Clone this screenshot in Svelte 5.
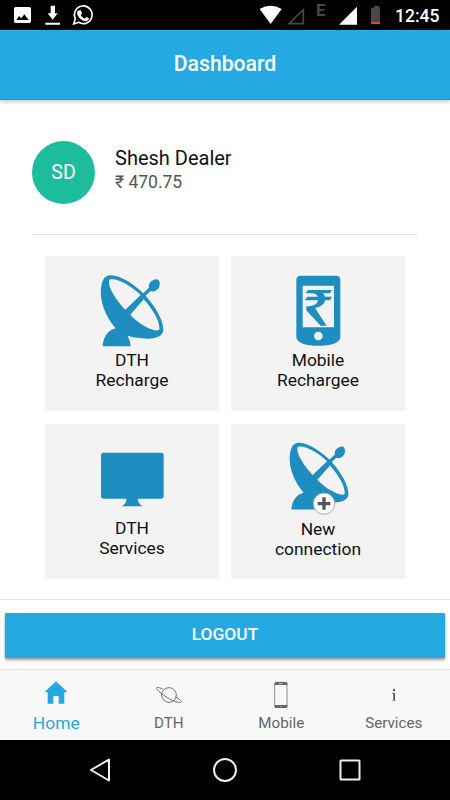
<script>
  const services = [
    { icon: 'dish', lines: ['DTH', 'Recharge'] },
    { icon: 'phone', lines: ['Mobile', 'Rechargee'] },
    { icon: 'monitor', lines: ['DTH', 'Services'] },
    { icon: 'newdish', lines: ['New', 'connection'] }
  ];
  const tabs = ['Home', 'DTH', 'Mobile', 'Services'];
</script>

{#snippet dish()}
  <path fill-rule="evenodd" d="M205 76C235 68 287 103 319 138C350 173 372 213 371 240C369 263 335 268 310 264C293 263 279 260 264 256Q271 269 273 288H189C191 258 205 240 228 234C195 195 180 150 184 115C187 90 193 79 205 76ZM209 88C202 108 230 150 257 178L303 134C275 106 229 80 209 88ZM312 147L272 193C300 225 350 248 359 238C362 212 335 172 312 147Z" />
  <path d="M309 130L328 112L335 120L316 138Z" />
  <path d="M328 113C324 98 339 86 353 87C362 92 363 106 355 116C347 124 333 126 328 119Z" />
{/snippet}

<div class="screen">
  <div class="status">
    <svg width="110" height="30" viewBox="0 0 330 90">
      <path fill="#fff" fill-rule="evenodd" d="M47 21H88Q93 21 93 26V64Q93 69 88 69H47Q42 69 42 64V26Q42 21 47 21ZM49 60H86L73 43L64 55L57 48Z" />
      <path fill="#fff" d="M152 17H165V40H173L158 59L143 40H152ZM136 68H180V74H136Z" />
      <path fill="none" stroke="#fff" stroke-width="5" d="M221 72L226 56A26.500 26.500 0 1 1 236 67Z" />
      <path fill="#fff" d="M237 31Q242 29 244 34L246 40Q246 42 242 45Q246 53 254 56L259 51L267 55Q266 63 257 64C246 64 231 49 231 39Q231 33 237 31Z" />
    </svg>
    <svg width="125" height="30" viewBox="90 0 375 90">
      <path fill="#fff" d="M104 27Q136 8 170 27L137 72Z" />
      <path fill="none" stroke="#484848" stroke-width="5" d="M192 71L235 29V71Z" />
      <path fill="#fff" d="M342 74L396 20V74Z" />
      <path fill="#484848" d="M438 23H447V18H463V23H473V67H438Z" />
      <path fill="#e64a19" d="M438 66H473V72H438Z" />
      <text x="273" y="49" class="edge">E</text>
    </svg>
    <span class="time">12:45</span>
  </div>

  <header><h1>Dashboard</h1></header>

  <main>
    <section class="profile">
      <div class="avatar">SD</div>
      <div class="who">
        <div class="name">Shesh Dealer</div>
        <div class="balance">₹ 470.75</div>
      </div>
    </section>

    <section class="grid">
      {#each services as s}
        <button class="card {s.icon}">
          {#if s.icon === 'dish'}
            <svg width="66" height="74" viewBox="178 68 198 222">{@render dish()}</svg>
          {:else if s.icon === 'phone'}
            <svg width="66" height="74" viewBox="181 68 198 222">
              <path fill-rule="evenodd" d="M227 76H335Q347 77 347 90V262C342 279 317 286 281 286C245 286 220 279 215 262V90Q215 77 227 76ZM234 106V231H328V106ZM281 244A13 13 0 1 0 281 270A13 13 0 1 0 281 244Z" />
              <path d="M250 119H322L316 129H295Q300 134 301 139H322L316 150H301C299 163 287 170 271 173L306 226H288L245 180V168C264 169 278 162 280 150H241L248 139H279Q275 129 261 129H242Z" />
            </svg>
          {:else if s.icon === 'monitor'}
            <svg width="66" height="74" viewBox="178 62 198 222">
              <path d="M191 97H364Q372 97 372 105V228Q372 235 364 235H294C295 246 300 253 309 258H245C255 252 261 246 260 235H191Q184 235 184 228V105Q184 97 191 97Z" />
            </svg>
          {:else}
            <svg width="66" height="74" viewBox="181 62 198 222">
              <g transform="translate(22.500 -3) scale(.94)">{@render dish()}</g>
              <circle cx="298" cy="250" r="32" fill="#fff" stroke="#aaa" stroke-width="3" />
              <path fill="#555" d="M293 231H303V245H317V255H303V268H293V255H279V245H293Z" />
            </svg>
          {/if}
          {#each s.lines as line}<span>{line}</span>{/each}
        </button>
      {/each}
    </section>
  </main>

  <div class="action"><button class="logout">LOGOUT</button></div>

  <nav class="tabs">
    {#each tabs as tab, i}
      <a href="#{tab}" class:active={i === 0}>
        <svg width="30" height="30" viewBox="0 0 90 90">
          {#if i === 0}
            <path fill="#25a9e2" d="M45 10L80 43H70V77H53V54H37V77H20V43H10Z" />
          {:else if i === 1}
            <g fill="none" stroke="#555" stroke-width="2.500">
              <circle cx="45" cy="51" r="22" />
              <path d="M27 34C8 24 4 29 10 35C20 47 51 69 73 73C87 76 85 68 65 57" />
            </g>
          {:else if i === 2}
            <rect x="26" y="13" width="37" height="76" rx="5" fill="none" stroke="#777" stroke-width="2.500" />
            <path fill="#666" d="M26 21V16Q26 12 31 12H59Q64 12 64 16V21ZM26 81H64V86Q64 90 59 90H31Q26 90 26 86Z" />
            <path stroke="#f8f8f8" stroke-width="2" d="M39 17H50M43 86H47" />
          {:else}
            <circle cx="45" cy="36" r="3.500" fill="#555" />
            <path fill="#555" d="M40 45H48V66L51 68H39L43 66V48L40 47Z" />
          {/if}
        </svg>
        <span>{tab}</span>
      </a>
    {/each}
  </nav>

  <div class="system">
    <svg width="450" height="60" viewBox="0 0 450 60" fill="none" stroke="#eee" stroke-width="2" stroke-linejoin="round">
      <path d="M91 30L109 19.500V40.500Z" />
      <circle cx="225" cy="30" r="11" />
      <rect x="340.500" y="20.500" width="19" height="19" rx=".5" />
    </svg>
  </div>
</div>

<style>
  :global(body) { margin: 0; background: #fff; }
  .screen {
    width: 450px;
    height: 800px;
    display: flex;
    flex-direction: column;
    overflow: hidden;
    background: #fff;
    font-family: Roboto, "Noto Sans", sans-serif;
    color: #111;
  }
  svg { display: block; flex: none; }
  button { border: 0; margin: 0; padding: 0; font: inherit; color: inherit; }
  .status {
    height: 30px;
    flex: none;
    display: flex;
    align-items: center;
    background: #000;
  }
  .status svg + svg { margin-left: 145px; }
  .edge { font: 700 50px Roboto, sans-serif; fill: #484848; }
  .time {
    margin-left: 15px;
    color: #fff;
    font-size: 17.500px;
    font-weight: 500;
    line-height: 30px;
    padding-top: 2px;
  }
  header {
    height: 70px;
    flex: none;
    box-sizing: border-box;
    display: flex;
    justify-content: center;
    background: #25a9e2;
    border-bottom: 1px solid #159bd5;
    box-shadow: 0 2px 4px rgba(0, 0, 0, .22);
  }
  h1 {
    margin: 0;
    color: #fff;
    font-size: 21.200px;
    line-height: 68px;
    font-weight: 500;
  }
  main { flex: none; height: 499px; }
  .profile {
    height: 134px;
    margin: 0 32px;
    border-bottom: 1px solid #e2e2e2;
    display: flex;
  }
  .avatar {
    width: 63px;
    height: 63px;
    margin-top: 41px;
    border-radius: 50%;
    background: #1dbc9c;
    color: #fff;
    font-size: 19.500px;
    line-height: 63px;
    text-align: center;
  }
  .who { margin: 46px 0 0 20px; }
  .name { font-size: 20px; line-height: 25px; }
  .balance { font-size: 17.500px; line-height: 22px; color: #555; }
  .grid {
    margin: 21px 45px 0;
    display: grid;
    grid-template-columns: 174px 174px;
    grid-auto-rows: 155px;
    gap: 13px 12px;
  }
  .card {
    display: flex;
    flex-direction: column;
    align-items: center;
    background: #f3f3f3;
    padding-top: 17px;
    font-size: 17.400px;
    line-height: 20px;
    fill: #1d8ebf;
  }
  .card svg { margin-bottom: 3px; }
  .card.newdish svg { margin-bottom: 4px; }
  .action {
    height: 70px;
    flex: none;
    box-sizing: border-box;
    border-top: 1px solid #e2e2e2;
    padding: 13px 5px 0;
  }
  .logout {
    display: block;
    width: 440px;
    height: 45px;
    padding-bottom: 3px;
    background: #25a9e2;
    color: #fff;
    font-size: 17.400px;
    font-weight: 500;
    border-radius: 1px;
    box-shadow: 0 2px 3px rgba(0, 0, 0, .4);
  }
  .tabs {
    height: 71px;
    flex: none;
    box-sizing: border-box;
    border-top: 1px solid #e2e2e2;
    background: #f8f8f8;
    display: flex;
  }
  .tabs a {
    width: 112.500px;
    display: flex;
    flex-direction: column;
    align-items: center;
    padding-top: 8px;
    box-sizing: border-box;
    text-decoration: none;
    color: #666;
    font-size: 15.200px;
    line-height: 30px;
  }
  .tabs a.active { color: #25a9e2; font-size: 17.400px; }
  .system { height: 60px; flex: none; background: #000; }
</style>
